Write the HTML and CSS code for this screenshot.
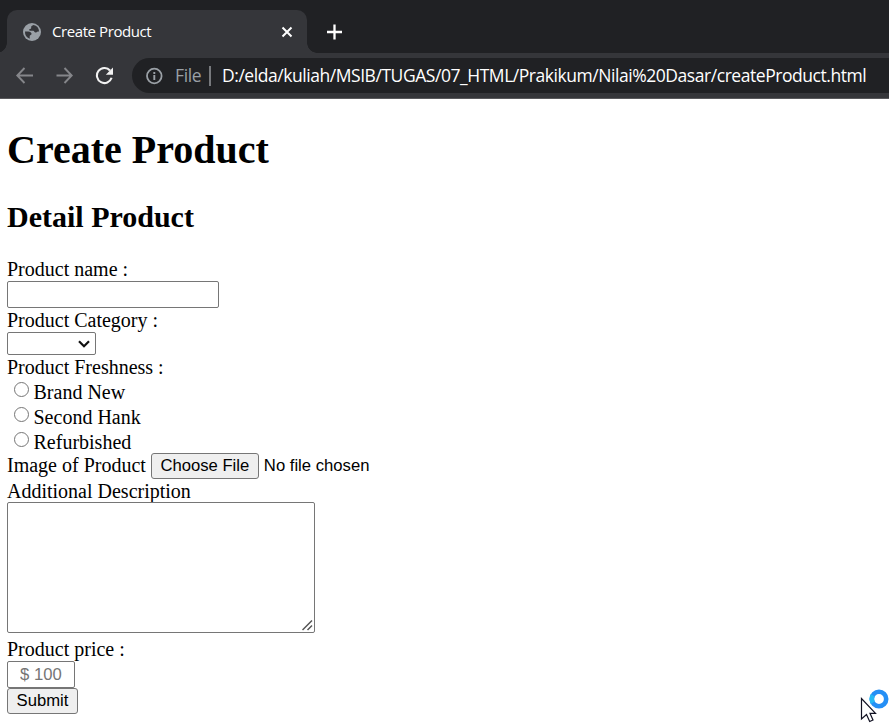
FILE: index.html
```html
<!DOCTYPE html>
<html lang="en">
<head>
<meta charset="utf-8">
<title>Create Product</title>
<link rel="stylesheet" href="styles.css">
</head>
<body>
<header class="browser">
  <div class="tabstrip">
    <div class="tab">
      <svg class="globe" width="18" height="18" viewBox="0 0 18 18"><circle cx="9" cy="9" r="9" fill="#9aa0a6"/><path d="M10.500 2.100C9 3 8 3.200 8.200 4.400c.2 1.200-.8 1.500-1.700 1.800-.8.3-.3 1.500.6 1.500h3.100c1.200 0 1.100 1.800 2.400 1.800 1.200 0 1.200-1.100 2.400-1.100h1.100A7.100 7.100 0 0 0 10.500 2.100zM2 8.600h3.200c1.800 0 3.400 1.200 3.400 2.500 0 1-1.900.9-1.900 2.100v2.500A7.100 7.100 0 0 1 2 8.600z" fill="#35363a"/></svg>
      <span class="tab-title">Create Product</span>
      <svg class="close" width="12" height="12" viewBox="0 0 12 12"><path d="M1.500 1.500l9 9m0-9l-9 9" stroke="#fff" stroke-width="2"/></svg>
    </div>
    <svg class="plus" width="16" height="16" viewBox="0 0 16 16"><path d="M7.500 .5v15M0 8h15" stroke="#fff" stroke-width="2.300"/></svg>
  </div>
  <div class="toolbar">
    <svg class="nav" width="18" height="18" viewBox="0 0 18 18"><path d="M18 8.500H2.500M9.500 1L2.300 8.500 9.500 16" fill="none" stroke="#85868a" stroke-width="1.900"/></svg>
    <svg class="nav" width="18" height="18" viewBox="0 0 18 18"><path d="M1.500 8.500H16M9.500 1L16.700 8.500 9.500 16" fill="none" stroke="#85868a" stroke-width="1.900"/></svg>
    <svg class="nav" width="18" height="18" viewBox="0 0 18 18"><path d="M15 3.500A7.500 7.500 0 1 0 16.600 10.800" fill="none" stroke="#f1f1f1" stroke-width="2.100"/><path d="M18 .5v7.200h-7.200z" fill="#f1f1f1"/></svg>
    <div class="omnibox">
      <svg class="info" width="18" height="18" viewBox="0 0 18 18"><circle cx="9.300" cy="9" r="7.300" fill="none" stroke="#9aa0a6" stroke-width="1.800"/><path d="M9.300 8v5M9.300 5v2" stroke="#9aa0a6" stroke-width="1.900"/></svg>
      <span class="scheme">File</span>
      <span class="divider"></span>
      <span class="url">D:/elda/kuliah/MSIB/TUGAS/07_HTML/Prakikum/Nilai%20Dasar/createProduct.html</span>
    </div>
  </div>
</header>
<main class="page">
  <h1>Create Product</h1>
  <h2>Detail Product</h2>
  <form>
    <label class="line name-label">Product name :</label>
    <input class="name" type="text">
    <label class="line category-label">Product Category :</label>
    <div class="select"><svg width="12" height="8" viewBox="0 0 12 8"><path d="M1 1.200l5 5 5-5" fill="none" stroke="#111" stroke-width="2.200"/></svg></div>
    <label class="line freshness-label">Product Freshness :</label>
    <label class="choice"><span class="radio"></span>Brand New</label>
    <label class="choice"><span class="radio"></span>Second Hank</label>
    <label class="choice"><span class="radio"></span>Refurbished</label>
    <div class="file"><label>Image of Product</label><button type="button" class="choose">Choose File</button><span class="chosen">No file chosen</span></div>
    <label class="line description-label">Additional Description</label>
    <div class="area"><svg width="11" height="11" viewBox="0 0 11 11"><path d="M.5 10L10 .5M5.500 10L10 5.500" stroke="#555" stroke-width="1.500"/></svg></div>
    <label class="line price-label">Product price :</label>
    <input class="price" type="text" placeholder="$ 100">
    <button type="button" class="submit">Submit</button>
  </form>
</main>
<svg class="pointer" width="30" height="36" viewBox="0 0 30 36"><circle cx="19" cy="11" r="7.200" fill="#fff" stroke="#258ff5" stroke-width="4.600"/><path d="M12.800 7.300a7.200 7.200 0 0 0 0 7.400" fill="none" stroke="#25b9f5" stroke-width="4.600"/><path d="M1.500 10.500V31l5-4.500 3.200 7 3.300-1.500-3-6.700h5.500z" fill="#fff" stroke="#111122" stroke-width="1.200"/></svg>
</body>
</html>
```
FILE: styles.css
```css
* { box-sizing: border-box; }
body {
  margin: 0;
  height: 725px;
  overflow: hidden;
  background: #fff;
  color: #000;
  font: 20px/24px "Liberation Serif", serif;
}
svg { display: block; flex: none; }
.browser { font-family: "Open Sans", sans-serif; height: 99px; }
.tabstrip {
  display: flex;
  align-items: flex-end;
  height: 53px;
  padding-left: 7px;
  background: #202124;
}
.tab {
  position: relative;
  display: flex;
  align-items: center;
  width: 300px;
  height: 43px;
  padding: 0 14px 0 16px;
  border-radius: 10px 10px 0 0;
  background: #35363a;
}
.tab::before, .tab::after {
  content: "";
  position: absolute;
  bottom: 0;
  width: 10px;
  height: 10px;
}
.tab::before { left: -10px; background: radial-gradient(circle at 0 0, transparent 9.5px, #35363a 10px); }
.tab::after { right: -10px; background: radial-gradient(circle at 100% 0, transparent 9.5px, #35363a 10px); }
.tab-title {
  margin-left: 11px;
  padding-bottom: 2px;
  flex: 1;
  color: #fff;
  font-size: 15px;
  letter-spacing: -0.42px;
  white-space: nowrap;
}
.plus { margin: 0 0 13px 20px; }
.toolbar {
  display: flex;
  align-items: center;
  height: 46px;
  padding-left: 15px;
  background: #35363a;
  border-bottom: 1px solid #59595c;
}
.nav { margin-right: 22px; }
.omnibox {
  display: flex;
  align-items: center;
  flex: 1;
  height: 35px;
  margin-left: -3px;
  padding-left: 13px;
  border-radius: 18px 0 0 18px;
  background: #202124;
  white-space: nowrap;
  font-size: 17.5px;
}
.scheme { width: 34px; margin-left: 12px; padding-bottom: 2px; color: #9aa0a6; letter-spacing: -0.4px; }
.divider { width: 2px; height: 20px; margin-right: 11px; background: #77797d; }
.url { padding-bottom: 2px; color: #fff; letter-spacing: -0.45px; }
.page { padding-left: 7px; }
h1 { margin: 27px 0 0; font-size: 40px; line-height: 48px; }
h2 { margin: 24px 0 0; font-size: 30px; line-height: 38px; }
form { display: flex; flex-direction: column; align-items: flex-start; margin-top: 22px; }
.line { height: 23px; }
.name-label { line-height: 22px; }
.name, .price, .select, .area { border: 1px solid #767676; border-radius: 2px; background: #fff; }
.name { width: 212px; height: 27px; }
.category-label { height: 24px; }
.select {
  display: flex;
  align-items: center;
  justify-content: flex-end;
  width: 89px;
  height: 23px;
  padding-right: 5px;
}
.freshness-label { height: 24px; }
.choice { display: flex; height: 25px; padding-left: 6.5px; line-height: 27px; }
.radio {
  width: 15px;
  height: 15px;
  margin: 3px 5px 0 0;
  border: 1px solid #767676;
  border-radius: 50%;
}
.file { display: flex; height: 26px; margin-top: -1px; }
button, input, .chosen { font: 16.67px/24px "Liberation Sans", sans-serif; }
button {
  height: 26px;
  padding: 0;
  border: 1px solid #767676;
  border-radius: 3px;
  background: #efefef;
  color: #000;
  line-height: 22px;
}
.choose { width: 108px; margin: 0 5px; }
.chosen { line-height: 26px; }
.area {
  display: flex;
  align-items: flex-end;
  justify-content: flex-end;
  width: 308px;
  height: 131px;
  padding: 1px;
}
.price-label { margin-top: 4px; height: 24px; }
.price { width: 68px; height: 27px; padding: 0 0 0 12px; }
.price::placeholder { color: #757575; }
.submit { width: 71px; }
.pointer { position: absolute; left: 860px; top: 688px; }
```
